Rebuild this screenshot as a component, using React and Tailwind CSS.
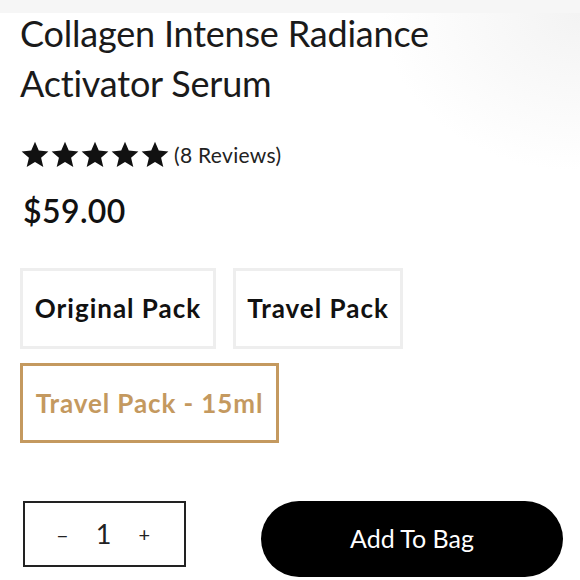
import React from "react";

const Star = () => (
  <svg width="30" height="28" viewBox="0 0 24 23" className="shrink-0">
    <path
      d="M12 0.6l3.1 7.3 7.9.65-6 5.2 1.82 7.7L12 17.35l-6.82 4.1 1.82-7.7-6-5.2 7.9-.65z"
      fill="#111"
    />
  </svg>
);

export default function App() {
  return (
    <div
      className="w-[580px] h-[580px] overflow-hidden bg-white relative"
      style={{ fontFamily: "Lato, 'Open Sans', sans-serif" }}
    >
      <div className="h-[13px] bg-[#f6f6f6]" />
      <div className="absolute right-0 top-[13px] w-[200px] h-[160px] bg-[radial-gradient(ellipse_at_top_right,#f3f3f3_0%,#ffffff_70%)]" />
      <div className="relative px-5">
        <h1 className="text-[36px] leading-[50px] text-[#1a1a1a] font-normal tracking-[-0.2px] mt-[-5px]">
          Collagen Intense Radiance
          <br />
          Activator Serum
        </h1>
        <div className="flex items-center mt-[33px] h-[28px]">
          <div className="flex">
            <Star />
            <Star />
            <Star />
            <Star />
            <Star />
          </div>
          <span className="ml-[4px] text-[21px] text-[#222] tracking-[0.3px]">(8 Reviews)</span>
        </div>
        <div className="mt-[23px] ml-[3px] text-[32px] font-semibold text-[#111] leading-[38px] tracking-[0.4px]">
          $59.00
        </div>
        <div className="flex gap-[17px] mt-[38px]">
          <div className="w-[196px] h-[81px] border-[3px] border-[#eeeeee] flex items-center justify-center text-[26px] font-bold text-[#111] tracking-[1px]">
            Original Pack
          </div>
          <div className="w-[170px] h-[81px] border-[3px] border-[#eeeeee] flex items-center justify-center text-[26px] font-bold text-[#111] tracking-[1px]">
            Travel Pack
          </div>
        </div>
        <div className="mt-[14px] w-[259px] h-[80px] border-[3px] border-[#c4995f] flex items-center justify-center text-[26px] font-bold text-[#c4995f] tracking-[0.9px]">
          Travel Pack - 15ml
        </div>
        <div className="flex items-start justify-between mt-[58px] ml-[3px]">
          <div className="w-[163px] h-[66px] border-2 border-[#222] flex items-center justify-between pl-[31px] pr-[34px] text-[#222]">
            <span className="text-[22px]">–</span>
            <span className="text-[27px]">1</span>
            <span className="text-[20px]">+</span>
          </div>
          <div className="w-[302px] h-[76px] mr-[-3px] rounded-full bg-black text-white flex items-center justify-center text-[25px]">
            Add To Bag
          </div>
        </div>
      </div>
    </div>
  );
}
